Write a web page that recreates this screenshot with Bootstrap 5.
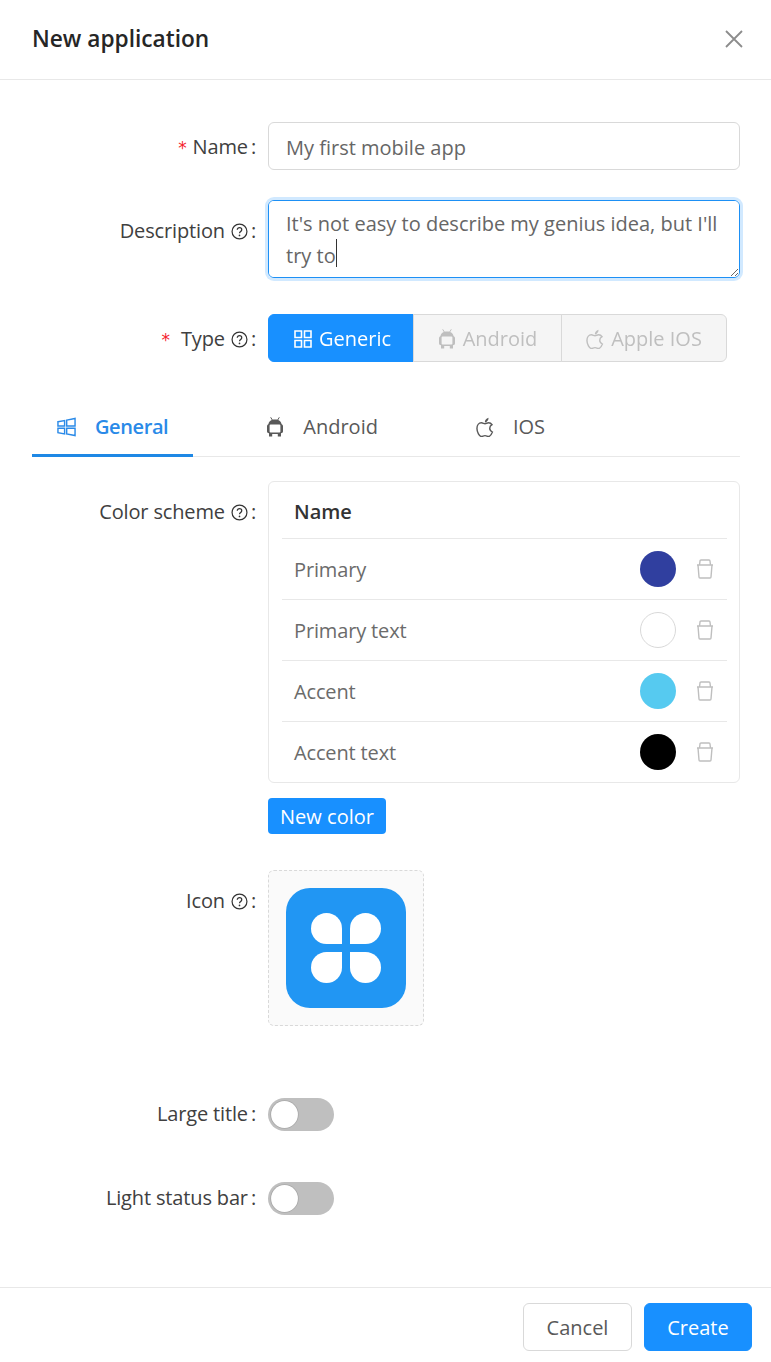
<!DOCTYPE html>
<html lang="en">
<head>
<meta charset="UTF-8">
<title>New application</title>
<link href="https://cdn.jsdelivr.net/npm/bootstrap@5.3.3/dist/css/bootstrap.min.css" rel="stylesheet">
<style>
    body {
        font-family: "Open Sans", "Noto Sans", sans-serif;
        font-size: 20px;
        color: #4a4a4a;
        background: #fff;
    }
    .dlg-head {
        height: 80px;
        padding: 0 28px 2px 32px;
        border-bottom: 1px solid #e8e8e8;
    }
    .dlg-title {
        font-size: 22.7px;
        font-weight: 600;
        color: #262626;
        margin: 0;
    }
    .dlg-close {
        width: 18px;
        height: 18px;
        color: #8c8c8c;
    }
    .dlg-body {
        padding: 42px 31px 0 32px;
        height: 1207px;
    }
    .f-row { display: flex; }
    .f-label {
        width: 224px;
        flex: none;
        height: 48px;
        line-height: 50px;
        text-align: right;
        margin: 0 12px 0 0;
        white-space: nowrap;
        color: #404040;
        letter-spacing: -.15px;
    }
    .f-label::after { content: ":"; margin-left: 3px; }
    .f-low { margin-top: 6px; }
    .req { color: #f5222d; font-family: "DejaVu Sans", sans-serif; font-size: 17px; margin-right: 6px; }
    .hint { width: 17px; height: 17px; margin-left: 6px; vertical-align: -2px; color: #333; }
    .f-field { width: 472px; }
    .form-control.f-input {
        height: 48px;
        padding: 2px 17px 0;
        font-size: 20px;
        color: #666;
        border-color: #d9d9d9;
        border-radius: 6px;
    }
    .form-control.f-area {
        height: 78px;
        padding: 7px 17px;
        font-size: 20px;
        line-height: 32px;
        color: #666;
        border-color: #1d90f5;
        border-radius: 6px;
        box-shadow: 0 0 0 3px rgba(24, 144, 255, .2);
    }
    .caret-line {
        position: absolute;
        left: 68px;
        top: 39px;
        width: 1px;
        height: 28px;
        background: #333;
    }
    .type-group .btn {
        height: 48px;
        font-size: 20px;
        padding: 2px 0 0;
        flex: none;
        display: flex;
        align-items: center;
        justify-content: center;
        gap: 7px;
        border-radius: 6px;
    }
    .type-on { background: #1890ff; border: 1px solid #1890ff; color: #fff; }
    .type-on:hover { background: #1890ff; color: #fff; }
    .type-off, .type-off:disabled { background: #f5f5f5; border: 1px solid #d9d9d9; color: #bfbfbf; opacity: 1; }
    .type-group .btn.w-generic { width: 146px; padding-left: 3px; }
    .w-android { width: 149px; }
    .w-apple { width: 166px; }
    .ic { width: 18px; height: 20px; flex: none; }
    .ic-win { width: 19px; }
    .app-tabs {
        margin-top: 36px;
        height: 59px;
        border-bottom: 1px solid #e8e8e8;
        gap: 48px;
    }
    .app-tabs .nav-link {
        height: 59px;
        padding: 2px 25px 0;
        display: flex;
        align-items: center;
        gap: 19px;
        border: 0;
        border-bottom: 3px solid transparent;
        border-radius: 0;
        margin: 0;
        color: #595959;
        background: none;
    }
    .app-tabs .nav-link.active {
        color: #2a8ae8;
        font-weight: 600;
        letter-spacing: -.4px;
        border-bottom-color: #1e88e5;
        background: none;
    }
    .scheme-wrap { margin-top: 24px; }
    .scheme-card {
        height: 302px;
        padding: 0 12px 0 13px;
        border: 1px solid #e8e8e8;
        border-radius: 6px;
    }
    .scheme-head {
        height: 57px;
        padding: 4px 12px 0;
        font-weight: 600;
        color: #333;
        border-bottom: 1px solid #e8e8e8;
    }
    .scheme-row {
        height: 61px;
        padding: 0 13px 0 12px;
        color: #6b6b6b;
        border-bottom: 1px solid #e8e8e8;
    }
    .scheme-row:last-child { border-bottom: 0; height: 60px; }
    .row-name { flex-grow: 1; padding-top: 2px; letter-spacing: -.15px; }
    .swatch { width: 36px; height: 36px; border-radius: 50%; margin-right: 20px; }
    .sw-primary { background: #303f9f; }
    .sw-white { background: #fff; border: 1px solid #d9d9d9; }
    .sw-accent { background: #56caf0; }
    .sw-black { background: #000; }
    .trash { width: 18px; height: 20px; color: #bfbfbf; }
    .btn.btn-new {
        display: block;
        margin-top: 15px;
        width: 118px;
        height: 36px;
        padding: 2px 0 0;
        font-size: 20px;
        color: #fff;
        background: #1890ff;
        border: 0;
        border-radius: 4px;
    }
    .icon-row { margin-top: 36px; }
    .icon-drop {
        width: 156px;
        height: 156px;
        padding: 17px;
        background: #fafafa;
        border: 1px dashed #d9d9d9;
        border-radius: 6px;
    }
    .sw-row { align-items: center; }
    .sw-row .f-label { height: 33px; line-height: 31px; }
    .toggle-box { min-height: 0; padding: 0; margin: 0; }
    .toggle-box .form-check-input {
        width: 66px;
        height: 33px;
        margin: 0;
        float: none;
        display: block;
        background-color: #bfbfbf;
        border: 0;
        background-image: url("data:image/svg+xml,%3csvg xmlns='http://www.w3.org/2000/svg' viewBox='-4 -4 8 8'%3e%3ccircle r='3.45' fill='%23000' fill-opacity='.12'/%3e%3ccircle r='3.25' fill='%23fff'/%3e%3c/svg%3e");
    }
    .dlg-foot {
        height: 75px;
        padding: 15px 19px 0 0;
        border-top: 1px solid #e8e8e8;
        gap: 12px;
    }
    .dlg-foot .btn { height: 48px; padding: 2px 0 0; font-size: 20px; border-radius: 6px; }
    .btn.btn-cancel { width: 109px; color: #595959; background: #fff; border: 1px solid #d9d9d9; }
    .btn.btn-create { width: 108px; color: #fff; background: #1890ff; border: 1px solid #1890ff; }
</style>
</head>
<body>

<svg width="0" height="0" class="position-absolute">
    <symbol id="i-hint" viewBox="0 0 24 24">
        <circle cx="12" cy="12" r="10.5" fill="none" stroke="currentColor" stroke-width="1.7"/>
        <path d="M8.8 9.6c0-1.8 1.4-3 3.2-3s3.2 1.2 3.2 2.9c0 2.4-3.2 2.6-3.2 5" fill="none" stroke="currentColor" stroke-width="1.7"/>
        <circle cx="12" cy="17.6" r="1.2" fill="currentColor"/>
    </symbol>
    <symbol id="i-grid" viewBox="0 0 18 20">
        <path d="M1 2h6.500v6.500H1zM10.500 2H17v6.500h-6.500zM1 11.500h6.500V18H1zM10.500 11.500H17V18h-6.500z" fill="none" stroke="currentColor" stroke-width="1.600"/>
    </symbol>
    <symbol id="i-win" viewBox="2 2 20 20">
        <path d="M3 6.400 10 5.200V11H3zM12.200 4.800 21 3v8h-8.800zM3 13.400h7v5.800l-7-1.200zM12.200 13.400H21V21l-8.800-1.600z" fill="none" stroke="currentColor" stroke-width="1.500"/>
    </symbol>
    <symbol id="i-droid" viewBox="0 0 18 20">
        <path d="M4.700.3 6.300 3M13.300.3 11.700 3" fill="none" stroke="currentColor" stroke-width="1"/>
        <path fill="currentColor" fill-rule="evenodd" d="M1 9Q1 7.800 2.500 7C2.800 4.600 5 2.500 9 2.500S15.200 4.600 15.500 7Q17 7.800 17 9V14.500Q17 16 15 16.200V19.500H11.800V17H6.200V19.500H3V16.200Q1 16 1 14.500ZM4.600 7.500H13.400Q14.400 7.500 14.400 8.500V14.500Q14.400 15.500 13.400 15.500H4.600Q3.600 15.500 3.600 14.500V8.500Q3.600 7.500 4.600 7.500Z"/>
    </symbol>
    <symbol id="i-apple" viewBox="3 1.500 19 21">
        <path d="M16.400 7.600c-1.500 0-2.700.9-3.900.9s-2.300-.9-3.800-.9c-2.700 0-4.700 2.600-4.700 6 0 3.800 2.600 8.400 4.700 8.400 1.300 0 2.200-.9 3.800-.9s2.400.9 3.800.9c1.500 0 3.200-2.500 4-4.600-1.700-.8-2.800-2.200-2.800-4 0-1.700 1-3 2.400-3.800-.9-1.300-2.300-2-3.500-2z" fill="none" stroke="currentColor" stroke-width="1.500"/>
        <path d="M12.300 7.300c0-2.400 1.500-4.400 3.900-5 .1 2.500-1.500 4.600-3.900 5z" fill="currentColor"/>
    </symbol>
    <symbol id="i-trash" viewBox="0 0 18 20">
        <path d="M1 6h16M2 6 3 18a1 1 0 0 0 1 1h10a1 1 0 0 0 1-1L16 6M3.500 6 4 2a1 1 0 0 1 1-1h8a1 1 0 0 1 1 1l.5 4" fill="none" stroke="currentColor" stroke-width="1.400"/>
    </symbol>
</svg>

<div class="dlg-head d-flex align-items-center justify-content-between">
    <h5 class="dlg-title">New application</h5>
    <svg class="dlg-close" viewBox="0 0 18 18"><path d="M1 1l16 16M17 1 1 17" stroke="currentColor" stroke-width="1.800" fill="none"/></svg>
</div>

<div class="dlg-body">
    <div class="f-row">
        <label class="f-label"><span class="req">*</span>Name</label>
        <input type="text" class="form-control f-input f-field" value="My first mobile app">
    </div>

    <div class="f-row" style="margin-top:30px">
        <label class="f-label f-low">Description<svg class="hint"><use href="#i-hint"/></svg></label>
        <div class="f-field position-relative">
            <textarea class="form-control f-area" spellcheck="false">It's not easy to describe my genius idea, but I'll try to</textarea>
            <span class="caret-line"></span>
        </div>
    </div>

    <div class="f-row" style="margin-top:36px">
        <label class="f-label"><span class="req">*</span> Type<svg class="hint"><use href="#i-hint"/></svg></label>
        <div class="btn-group type-group">
            <button type="button" class="btn type-on w-generic"><svg class="ic"><use href="#i-grid"/></svg>Generic</button>
            <button type="button" class="btn type-off w-android" disabled><svg class="ic"><use href="#i-droid"/></svg>Android</button>
            <button type="button" class="btn type-off w-apple" disabled><svg class="ic"><use href="#i-apple"/></svg>Apple IOS</button>
        </div>
    </div>

    <ul class="nav nav-tabs app-tabs">
        <li class="nav-item"><a class="nav-link active" href="#"><svg class="ic ic-win"><use href="#i-win"/></svg>General</a></li>
        <li class="nav-item"><a class="nav-link" href="#"><svg class="ic"><use href="#i-droid"/></svg>Android</a></li>
        <li class="nav-item"><a class="nav-link" href="#"><svg class="ic"><use href="#i-apple"/></svg>IOS</a></li>
    </ul>

    <div class="f-row scheme-wrap">
        <label class="f-label f-low">Color scheme<svg class="hint"><use href="#i-hint"/></svg></label>
        <div class="f-field">
            <div class="scheme-card">
                <div class="scheme-head d-flex align-items-center">Name</div>
                <div class="scheme-row d-flex align-items-center">
                    <span class="row-name">Primary</span><span class="swatch sw-primary"></span><svg class="trash"><use href="#i-trash"/></svg>
                </div>
                <div class="scheme-row d-flex align-items-center">
                    <span class="row-name">Primary text</span><span class="swatch sw-white"></span><svg class="trash"><use href="#i-trash"/></svg>
                </div>
                <div class="scheme-row d-flex align-items-center">
                    <span class="row-name">Accent</span><span class="swatch sw-accent"></span><svg class="trash"><use href="#i-trash"/></svg>
                </div>
                <div class="scheme-row d-flex align-items-center">
                    <span class="row-name">Accent text</span><span class="swatch sw-black"></span><svg class="trash"><use href="#i-trash"/></svg>
                </div>
            </div>
            <button type="button" class="btn btn-new">New color</button>
        </div>
    </div>

    <div class="f-row icon-row">
        <label class="f-label f-low">Icon<svg class="hint"><use href="#i-hint"/></svg></label>
        <div class="icon-drop">
            <svg width="120" height="120" viewBox="0 0 120 120" class="d-block">
                <rect width="120" height="120" rx="24" fill="#2196f3"/>
                <g fill="#fff">
                    <path id="petal" d="M56 56H40.500a15.500 15.500 0 1 1 15.500-15.500z"/>
                    <use href="#petal" transform="rotate(90 60 60)"/>
                    <use href="#petal" transform="rotate(180 60 60)"/>
                    <use href="#petal" transform="rotate(270 60 60)"/>
                </g>
            </svg>
        </div>
    </div>

    <div class="f-row sw-row" style="margin-top:72px">
        <label class="f-label">Large title</label>
        <div class="form-check form-switch toggle-box"><input class="form-check-input" type="checkbox" role="switch"></div>
    </div>

    <div class="f-row sw-row" style="margin-top:51px">
        <label class="f-label">Light status bar</label>
        <div class="form-check form-switch toggle-box"><input class="form-check-input" type="checkbox" role="switch"></div>
    </div>
</div>

<div class="dlg-foot d-flex justify-content-end align-items-start">
    <button type="button" class="btn btn-cancel">Cancel</button>
    <button type="button" class="btn btn-create">Create</button>
</div>

<script src="https://cdn.jsdelivr.net/npm/bootstrap@5.3.3/dist/js/bootstrap.bundle.min.js"></script>
</body>
</html>
